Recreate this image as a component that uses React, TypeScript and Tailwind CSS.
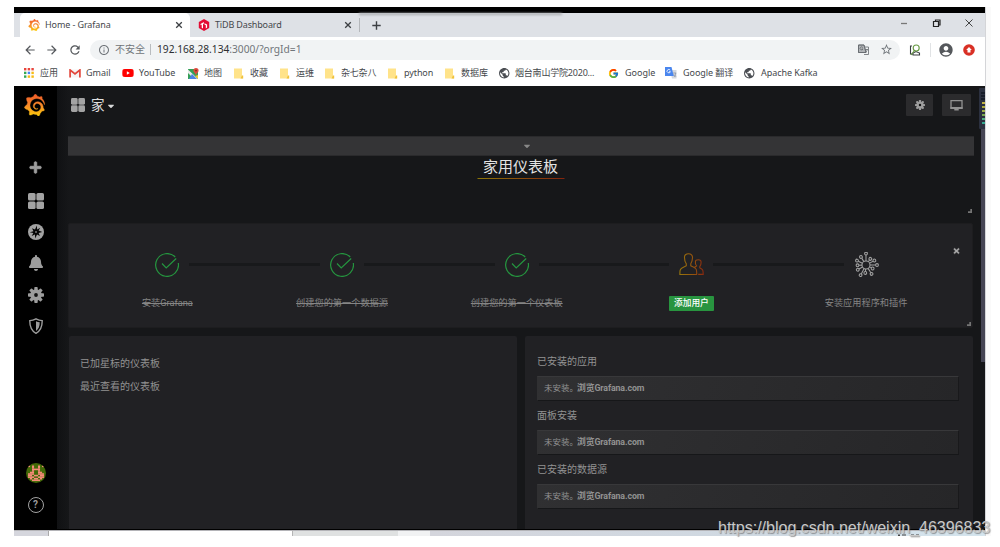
import React from "react";
import { SiGrafana } from "react-icons/si";
import { FcGoogle } from "react-icons/fc";
import { FaPlus, FaBell, FaCaretDown, FaYoutube, FaTimes } from "react-icons/fa";
import { MdPublic, MdAccountCircle, MdArrowBack, MdArrowForward, MdRefresh, MdInfoOutline, MdStarBorder } from "react-icons/md";

const ui = "font-['Noto_Sans','Noto_Sans_CJK_SC',sans-serif]";

function GrafanaLogo({ id, className }: { id: string; className: string }) {
  return (
    <span className="flex shrink-0">
      <svg className="absolute" width="0" height="0">
        <defs>
          <linearGradient id={id} x1="0" y1="0" x2="0" y2="1">
            <stop offset="0" stopColor="#f05a28" />
            <stop offset="0.5" stopColor="#f7882a" />
            <stop offset="1" stopColor="#fbca0a" />
          </linearGradient>
        </defs>
      </svg>
      <SiGrafana className={className} fill={`url(#${id})`} stroke={`url(#${id})`} strokeWidth={0.4} />
    </span>
  );
}

function TiDBLogo() {
  return (
    <svg viewBox="0 0 12 12" className="h-[12px] w-[12px] shrink-0">
      <path d="M6 0 11.2 3v6L6 12 .8 9V3z" fill="#e30c34" />
      <path d="M2.6 4.9 5.8 3v1.8L5 5.2v4.3l-1.3-.7V5.6l-1.1.6zM6.5 4.2l2.6 1.4v3L7.8 9.4V6.2l-1.3-.7z" fill="#fff" />
    </svg>
  );
}

function TabClose() {
  return (
    <svg viewBox="0 0 10 10" className="mr-[6px] h-[10px] w-[10px]" stroke="#3c3f43" strokeWidth="1.300">
      <path d="m2.200 2.200 5.600 5.600m0-5.600L2.200 7.800" />
    </svg>
  );
}

function AppsIcon() {
  const colors = ["#e8453c", "#e8453c", "#e8453c", "#34a853", "#4285f4", "#f6bb16", "#34a853", "#f6bb16", "#f6bb16"];
  return (
    <svg viewBox="0 0 10 10" className="h-[10px] w-[10px]">
      {colors.map((c, i) => (
        <rect key={i} x={(i % 3) * 3.7} y={Math.floor(i / 3) * 3.7} width="2.4" height="2.4" fill={c} />
      ))}
    </svg>
  );
}

const GmailIcon = () => (
  <svg viewBox="0 0 12 9" className="h-[9px] w-[12px]">
    <path d="M1 .5h10v8H1z" fill="#f5f5f5" />
    <path d="M1.1 8.5V1l4.9 4 4.9-4v7.5" fill="none" stroke="#e2463b" strokeWidth="1.7" />
  </svg>
);

const MapsIcon = () => (
  <svg viewBox="0 0 11 11" className="h-[11px] w-[11px]">
    <path d="M0 1h10v10H0z" fill="#34a057" />
    <path d="M0 1.6 10 11H6L0 5z" fill="#e9e9e9" />
    <path d="M4 6 9 11H1z" fill="#4c83e4" />
    <path d="M10 7v4L7 8z" fill="#f5c62c" />
    <path d="M8 0a2.6 2.6 0 0 1 2.6 2.6C10.600 4.600 8.500 5 8 7.400 7.500 5 5.400 4.600 5.400 2.600A2.600 2.600 0 0 1 8 0z" fill="#dd4b3e" />
    <circle cx="8" cy="2.600" r=".9" fill="#84261e" />
  </svg>
);

const FolderIcon = () => (
  <svg viewBox="0 0 10 11" className="h-[11px] w-[10px]">
    <path d="M0 .5h8v7.800h1V10.500H0z" fill="#ffe38a" />
    <path d="M8 7.500h1.200v3H6.500z" fill="#f0c23c" />
  </svg>
);

const TranslateIcon = () => (
  <svg viewBox="0 0 12 12" className="h-[12px] w-[12px]">
    <path d="M5 3h6.500v8.500H7z" fill="#d4d8df" />
    <path d="M0 0h6.500l2.300 9H0z" fill="#4a86ee" />
    <path d="M5.200 3.200A1.700 1.700 0 1 0 5.400 4.700H4" fill="none" stroke="#fff" strokeWidth=".8" />
    <path d="M8.200 6h3M9 10c1-1 1.500-2 1.700-4M9 7.500l2 2.300" stroke="#758195" strokeWidth=".6" fill="none" />
  </svg>
);

const Globe = () => <MdPublic className="-ml-px h-[12.500px] w-[12.500px] text-[#4b4e53]" />;

const bookmarks: { icon: React.ReactNode; label: string; w: string; t?: string }[] = [
  { icon: <AppsIcon />, label: "应用", w: "w-[45px]" },
  { icon: <GmailIcon />, label: "Gmail", w: "w-[53px]", t: "ml-[1px]" },
  { icon: <FaYoutube className="h-[12px] w-[12px] text-[#f00]" />, label: "YouTube", w: "w-[66px]", t: "ml-[1px]" },
  { icon: <MapsIcon />, label: "地图", w: "w-[46px]" },
  { icon: <FolderIcon />, label: "收藏", w: "w-[46px]" },
  { icon: <FolderIcon />, label: "运维", w: "w-[45px]" },
  { icon: <FolderIcon />, label: "杂七杂八", w: "w-[63px]", t: "tracking-[-0.2px]" },
  { icon: <FolderIcon />, label: "python", w: "w-[57px]", t: "tracking-[-0.1px]" },
  { icon: <FolderIcon />, label: "数据库", w: "w-[54px]" },
  { icon: <Globe />, label: "烟台南山学院2020...", w: "w-[109px]", t: "tracking-[-0.2px]" },
  { icon: <FcGoogle className="h-[11px] w-[11px]" />, label: "Google", w: "w-[57px]", t: "ml-[1px]" },
  { icon: <TranslateIcon />, label: "Google 翻译", w: "w-[79px]", t: "ml-[2px] tracking-[-0.05px]" },
  { icon: <Globe />, label: "Apache Kafka", w: "w-[90px]", t: "ml-[1px] tracking-[-0.05px]" },
];

function BrowserChrome() {
  return (
    <div className={`${ui} relative h-[73px] shrink-0 bg-white text-[9px] text-[#45484c]`}>
      <div className="flex h-[24px] items-center bg-[#dee1e6]">
        <div className="ml-[6px] flex h-full w-[170px] items-center rounded-t-[5px] bg-white pl-[8px]">
          <GrafanaLogo id="tabLogo" className="h-[12px] w-[12px]" />
          <span className="ml-[5px] flex-1 whitespace-nowrap tracking-[-0.1px]">Home - Grafana</span>
          <TabClose />
        </div>
        <div className="flex h-full w-[169px] items-center pl-[8px]">
          <TiDBLogo />
          <span className="ml-[5px] flex-1 whitespace-nowrap tracking-[-0.15px]">TiDB Dashboard</span>
          <TabClose />
        </div>
        <div className="h-[14px] w-px bg-[#b4b7bb]" />
        <svg viewBox="0 0 13 13" className="ml-[10px] h-[13px] w-[13px]" stroke="#3c3f43" strokeWidth="1.400">
          <path d="M2.300 6.500h8.400M6.500 2.300v8.400" />
        </svg>
        <div className="flex-1" />
        <svg viewBox="0 0 74 12" className="mb-[5px] mr-[10px] h-[12px] w-[74px]" fill="none" stroke="#222" strokeWidth="1">
          <path d="M-1 6.500h7" stroke="#777" strokeWidth="1.300" />
          <path d="M32.500 4.500h5v5h-5zM34.500 4.500v-1.500h4.500v5h-1.500" strokeWidth="1.200" />
          <path d="m64.500 2.500 7 7m0-7-7 7" stroke="#444" />
        </svg>
      </div>
      <div className="absolute left-[345px] top-0 h-[2px] w-[203px] bg-[#a9abaf] blur-[1px]" />
      <div className="flex h-[25px] items-center">
        <MdArrowBack className="ml-[9px] h-[14px] w-[14px] text-[#55585c]" />
        <MdArrowForward className="ml-[8px] h-[14px] w-[14px] text-[#55585c]" />
        <MdRefresh className="ml-[9px] h-[14px] w-[14px] text-[#55585c]" />
        <div className="ml-[8px] flex h-[20px] w-[810px] items-center rounded-full bg-[#f1f3f4] pl-[8px] text-[#70757a]">
          <MdInfoOutline className="h-[12px] w-[12px]" />
          <span className="ml-[5px] w-[35px] whitespace-nowrap text-[10px]">不安全</span>
          <span className="h-[11px] w-px bg-[#b9bcbf]" />
          <span className="ml-[6px] flex-1 whitespace-nowrap text-[10.200px]">
            <span className="text-[#2c2e31]">192.168.28.134</span>:3000/?orgId=1
          </span>
          <svg viewBox="0 0 11 11" className="h-[11px] w-[11px]" fill="none" stroke="#666a6e" strokeWidth=".8">
            <path d="M.500 1h5.500l2 7.500H.500zM7 3h3.500v7.500H6M4.800 3.500A1.500 1.500 0 1 0 5 5H3.800M7.200 5.500H10M7.500 8.500C9 7.500 9 6 9 5.500" />
            <path d="M.500 1h5.500l2 7.500H.500z" fill="#666a6e" fillOpacity=".45" />
          </svg>
          <MdStarBorder className="ml-[11px] mr-[7px] h-[13px] w-[13px]" />
        </div>
        <svg viewBox="0 0 12 12" className="ml-[9px] h-[12px] w-[12px]" fill="none" strokeWidth="1.100">
          <path d="M3 2H1.500v8H4M4 11V9l3-1.500L10.500 9v2H3.500" stroke="#3c4043" />
          <circle cx="7.200" cy="4" r="3" stroke="#679a42" />
          <path d="M5.500 6.500 2 11" stroke="#679a42" />
        </svg>
        <div className="ml-[9px] h-[14px] w-px bg-[#e1e3e5]" />
        <MdAccountCircle className="ml-[7px] h-[16px] w-[16px] text-[#55585c]" />
        <svg viewBox="0 0 12 12" className="ml-[9px] h-[12px] w-[12px]">
          <circle cx="6" cy="6" r="5.800" fill="#d93025" />
          <path d="M6 3 8.800 6H7.500v2.500H4.500V6H3.200z" fill="#fff" />
        </svg>
      </div>
      <div className="flex h-[22px] items-center pl-[10px]">
        {bookmarks.map((b, i) => (
          <div key={i} className={`flex shrink-0 items-center whitespace-nowrap ${b.w}`}>
            <span className="flex w-[16px] shrink-0">{b.icon}</span>
            <span className={b.t ?? ""}>{b.label}</span>
          </div>
        ))}
      </div>
    </div>
  );
}

const Squares = ({ className }: { className: string }) => (
  <svg viewBox="0 0 16 16" className={className} fill="#a3a3a3">
    <rect width="7.600" height="7.600" rx="1.600" />
    <rect x="8.400" width="7.600" height="7.600" rx="1.600" />
    <rect y="8.400" width="7.600" height="7.600" rx="1.600" />
    <rect x="8.400" y="8.400" width="7.600" height="7.600" rx="1.600" />
  </svg>
);

function Gear({ className }: { className: string }) {
  return (
    <svg viewBox="0 0 16 16" className={className}>
      <g fill="#9d9d9d">
        {[0, 45, 90, 135].map((a) => (
          <rect key={a} x="6.300" y="0" width="3.400" height="16" rx=".8" transform={`rotate(${a} 8 8)`} />
        ))}
        <circle cx="8" cy="8" r="5.800" />
      </g>
      <circle cx="8" cy="8" r="1.900" fill="#111" />
    </svg>
  );
}

function Avatar() {
  const rows = ["10100101", "00100100", "00111100", "00100100", "01100110", "11100111", "11011011", "11100111", "01011010", "00111100"];
  return (
    <svg viewBox="0 0 20 20" className="h-[20px] w-[20px]">
      <clipPath id="av"><circle cx="10" cy="10" r="10" /></clipPath>
      <g clipPath="url(#av)">
        <rect width="20" height="20" fill="#426907" />
        {rows.map((r, y) =>
          r.split("").map((c, x) => (c === "1" ? <rect key={`${x}-${y}`} x={2 + x * 2} y={2.500 + y * 1.550} width="2.050" height="1.600" fill="#f58b78" /> : null)),
        )}
      </g>
    </svg>
  );
}

function Sidebar() {
  return (
    <div className="flex w-[43px] shrink-0 flex-col items-center bg-black text-[#9d9d9d]">
      <div className="mt-[8px] h-[22px] -translate-x-[1.500px]"><GrafanaLogo id="sideLogo" className="h-[22px] w-[22px]" /></div>
      <FaPlus className="mt-[45px] h-[13px] w-[13px]" stroke="currentColor" strokeWidth={36} />
      <Squares className="mt-[19px] h-[16px] w-[16px]" />
      <svg viewBox="0 0 16 16" className="mt-[15px] h-[16px] w-[16px]">
        <circle cx="8" cy="8" r="8" fill="#a3a3a3" />
        <path d="M8.800 1.500 9.200 5.500 12.300 3.800 10.600 6.600 14.300 8 10.600 8.900 12 12 9 10.500 7.300 14.500 6.900 10.600 3.700 12 5.400 9.100 1.800 8.200 5.500 7.200 4 4.200 7 5.600z" fill="#050505" />
        <circle cx="8" cy="8" r="1" fill="#777" />
      </svg>
      <FaBell className="mt-[15px] h-[16px] w-[14px]" />
      <Gear className="mt-[16px] h-[16px] w-[16px]" />
      <svg viewBox="0 0 14 16" className="mt-[15px] h-[16px] w-[14px]">
        <path d="M7 .800Q4 2.500.800 2.600C.700 8.500 2 12.800 7 15.300 12 12.800 13.300 8.500 13.200 2.600 10 2.500 7 .800 7 .800z" fill="none" stroke="#9d9d9d" strokeWidth="1.400" />
        <path d="M7 3.200c1.300.7 2.500 1 3.700 1.100 0 4-1 6.800-3.700 8.600z" fill="#9d9d9d" />
      </svg>
      <div className="flex-1" />
      <Avatar />
      <div className="mb-[16px] mt-[14px] flex h-[16px] w-[16px] items-center justify-center rounded-full border-[1.500px] border-[#a3a3a3] font-['Roboto','Liberation_Sans',sans-serif] text-[10px] font-bold leading-none">?</div>
    </div>
  );
}

const CheckIcon = () => (
  <svg viewBox="0 0 24 24" className="h-[24px] w-[24px]" fill="none" stroke="#25953f" strokeWidth="1.200">
    <path d="M23.300 10A11.400 11.400 0 1 1 20.200 4" />
    <path d="m7 10.500 4.200 4.500L21.200 5.500" />
  </svg>
);

const UsersIcon = () => (
  <svg viewBox="0 0 25 24" className="h-[24px] w-[25px]">
    <defs>
      <linearGradient id="ug" x1="0" x2="25" y1="0" y2="0" gradientUnits="userSpaceOnUse">
        <stop stopColor="#97770c" />
        <stop offset=".6" stopColor="#94510e" />
        <stop offset="1" stopColor="#8a260e" />
      </linearGradient>
    </defs>
    <g fill="none" stroke="url(#ug)" strokeWidth="1.100">
      <path d="M5.500 4.500C5.300 2 7 .800 9.500.800s4.200 1.400 4 4c-.1 3.200-.8 4.500-1.700 6v2c2.500 1.300 5 1.500 5.500 3.700.3 1.200.5 3 .4 5H.900c0-2-.1-3.600.4-4.800.7-2 3.800-2.500 6-3.900v-2C6 9.300 5.500 7.500 5.500 4.500z" />
      <path d="M15.300 14.500 17.600 13c-1-1.200-1.400-3-1.200-4.500.2-1.300 1.500-1.800 3-1.800 1.800 0 2.800 1 2.700 2.800 0 1.700-.3 2.600-1.300 4v1.400c1.500 1 2.600 1.300 3 2.500.4 1.300.4 2.600.4 4h-5" />
    </g>
  </svg>
);

function PluginIcon() {
  const spokes = [[0, 11.500], [35, 7.500], [62, 9.500], [90, 11], [118, 7.500], [148, 10.500], [185, 8], [208, 11.500], [240, 9.500], [268, 8.500], [296, 10], [328, 9.500]];
  return (
    <svg viewBox="0 0 26 26" className="h-[26px] w-[26px]" fill="none" stroke="#a2a2a2" strokeWidth="1.050">
      <circle cx="13" cy="13" r="4" />
      {spokes.map(([a, r]) => (
        <g key={a} transform={`rotate(${a} 13 13)`}>
          <path d={`M13 9V${13 - r + 1.400}`} />
          <circle cx="13" cy={13 - r} r="1.400" />
        </g>
      ))}
    </svg>
  );
}

const steps = [
  { icon: <CheckIcon />, label: "安装Grafana", kind: "done" },
  { icon: <CheckIcon />, label: "创建您的第一个数据源", kind: "done" },
  { icon: <CheckIcon />, label: "创建您的第一个仪表板", kind: "done" },
  { icon: <UsersIcon />, label: "添加用户", kind: "cta" },
  { icon: <PluginIcon />, label: "安装应用程序和插件", kind: "todo" },
];

const Corner = () => (
  <svg viewBox="0 0 4 4" className="absolute bottom-px right-[1px] h-[4px] w-[4px]"><path d="M4 0v4H0V2.300h2.300V0z" fill="#747474" /></svg>
);

function Steps() {
  return (
    <div className="relative mt-[9px] flex h-[105px] w-[905px] shrink-0 rounded-[2px] border border-[#1d1d1f] bg-[#212124] pl-[11px] pt-[27px]">
      {steps.map((s, i) => (
        <div key={i} className="flex w-[174.700px] shrink-0 flex-col items-center">
          <div className="flex h-[27px] w-full items-center">
            <div className={i === 0 ? "h-[3px] flex-1" : "h-[3px] flex-1 bg-[#18191b]"} />
            <div className="flex w-[44px] justify-center">{s.icon}</div>
            <div className={i === 4 ? "h-[3px] flex-1" : "h-[3px] flex-1 bg-[#18191b]"} />
          </div>
          {s.kind === "cta" ? (
            <div className="mt-[18px] flex h-[15px] w-[45px] items-center justify-center whitespace-nowrap rounded-[1px] bg-[#28943f] text-[8.700px] font-medium text-white">{s.label}</div>
          ) : (
            <div className={s.kind === "done" ? "mt-[17px] whitespace-nowrap text-[9.200px] leading-[15px] text-[#858585] line-through" : "mt-[17px] whitespace-nowrap text-[9.200px] leading-[15px] text-[#858585]"}>{s.label}</div>
          )}
        </div>
      ))}
      <FaTimes className="absolute right-[12px] top-[23px] h-[8px] w-[7px] text-[#aaa]" stroke="currentColor" strokeWidth={24} />
      <Corner />
    </div>
  );
}

function Dashboard() {
  return (
    <div className="relative flex min-w-0 flex-1 flex-col bg-[linear-gradient(90deg,#101113_0,#161719_12px)] pl-[11px] font-['Roboto','Noto_Sans_CJK_SC',sans-serif] text-[#929292]">
      <div className="flex h-[50px] shrink-0 items-start pr-[14px] pt-[8px]">
        <Squares className="ml-[3px] mt-[4px] h-[14px] w-[14px]" />
        <span className="ml-[6px] mt-[1px] text-[13.500px] leading-[20px] text-[#e0e0e0]">家</span>
        <FaCaretDown className="ml-[2px] mt-[7px] h-[10px] w-[8px] text-[#d8d9da]" />
        <div className="flex-1" />
        <div className="flex h-[22px] w-[27px] items-center justify-center rounded-[1px] bg-[#2b2b2d]"><Gear className="h-[10px] w-[10px]" /></div>
        <div className="ml-[9px] flex h-[22px] w-[29px] items-center justify-center rounded-[1px] bg-[#2b2b2d]">
          <svg viewBox="0 0 13 11" className="h-[11px] w-[13px]"><path d="M1 .700h11v7.300H1z" fill="none" stroke="#929292" strokeWidth="1.300" /><path d="M.400 7h12.200v1.900H.400zM4.300 9h4.400v1.600H4.300z" fill="#929292" /></svg>
        </div>
      </div>
      <div className="flex h-[20px] w-[906px] shrink-0 items-center justify-center border-y border-[#2a2a2c] bg-[#343436] pb-px pl-[12px]">
        <FaCaretDown className="h-[10px] w-[8px] text-[#888]" />
      </div>
      <div className="relative flex h-[58px] w-[905px] shrink-0 justify-center">
        <div className="flex h-[23px] w-[87px] translate-x-[0.500px] items-center justify-center bg-[linear-gradient(90deg,#8b7509,#8b4d0b,#83240d)] bg-[length:100%_1px] bg-bottom bg-no-repeat pb-[2px] pr-px text-[15px] leading-[20px] text-[#e3e3e3]">家用仪表板</div>
        <Corner />
      </div>
      <Steps />
      <div className="mt-[8px] flex flex-1 gap-[8px]">
        <div className="ml-px w-[448px] rounded-t-[2px] bg-[#212124] pl-[11px] pt-[17px] text-[10px] leading-[22.500px]">
          <div>已加星标的仪表板</div>
          <div>最近查看的仪表板</div>
        </div>
        <div className="w-[448px] rounded-t-[2px] bg-[#212124] pl-[12px] pt-[16px] text-[10px]">
          {["已安装的应用", "面板安装", "已安装的数据源"].map((t) => (
            <div key={t} className="h-[54px]">
              <div className="h-[24px] leading-[19px]">{t}</div>
              <div className="flex h-[25px] w-[422px] items-center border border-b-[#161719] border-l-[#303032] border-r-[#19191b] border-t-[#38383a] bg-[linear-gradient(110deg,#303032,#262628)] pl-[6px] text-[8.500px] text-[#929292]">
                <span className="w-[33px] whitespace-nowrap">未安装。</span>
                <span className="text-[8.800px] font-bold tracking-[-0.1px]">浏览Grafana.com</span>
              </div>
            </div>
          ))}
        </div>
      </div>
      <div className="absolute right-0 top-[43px] h-[233px] w-[4px] bg-[#454554]" />
      <div className="absolute right-0 top-[2px] flex h-[41px] w-[6px] flex-col items-end gap-[1px] rounded-l-[1px] bg-[#2b303f] pt-[4px]">
        <i className="h-[2px] w-[4px] bg-[#161c28]" />
        <i className="h-[2px] w-[4px] bg-[#161c28]" />
        <i className="h-[2px] w-[4px] bg-[#161c28]" />
        <i className="mt-[1px] h-[2px] w-[3px] bg-[#c0b243]" />
        <i className="mt-[1px] h-[2px] w-[3px] bg-[#a9a83b]" />
        <i className="mt-[1px] h-[2px] w-[3px] bg-[#9dac48]" />
        <i className="mt-[1px] h-[2px] w-[3px] bg-[#76a64d]" />
        <i className="mt-[1px] h-[2px] w-[3px] bg-[#50ad81]" />
        <i className="mt-[1px] h-[2px] w-[3px] bg-[#32a78e]" />
      </div>
    </div>
  );
}

export default function App() {
  return (
    <div className="relative h-[547px] w-[1000px] overflow-hidden bg-white pl-[14px] pt-[7px]">
      <div className="flex h-[529px] w-[977px] bg-[#fafafa]">
        <div className="flex h-[529px] w-[972px] flex-col overflow-hidden border-r border-[#d4d5d8]">
          <div className="h-[6px] shrink-0 bg-black" />
          <BrowserChrome />
          <div className="flex h-[444px] shrink-0 border-b border-black">
            <Sidebar />
            <Dashboard />
          </div>
          <div className="flex h-[6px] border-t border-[#b4b4b8] bg-[#d5d6dd]">
            <div className="w-[35px] border-r border-[#aaa]" />
            <div className="w-[244px] border-r border-[#b5b5b5] bg-white" />
            <div className="w-[105px] bg-[#dfe1e1]" />
            <div className="w-[32px] bg-[#f1f2f3]" />
            <div className="flex flex-1 items-end bg-[linear-gradient(90deg,#d4d5dc,#cfd9e2_60%,#d5e5ee)] pl-[467px]">
              <svg viewBox="0 0 22 2" className="h-[2px] w-[22px]" fill="#444">
                <path d="M1 .5h2V2H1zM5 .5h4v1H5zM14 .5h3v1h-3zM19 .5h3v1h-3z" />
              </svg>
            </div>
          </div>
        </div>
      </div>
      <div className="absolute left-[718px] top-[517px] whitespace-nowrap font-['Liberation_Sans',sans-serif] text-[16px] leading-[22px] text-[#c9c9c9] [text-shadow:1px_1px_1px_rgba(90,90,90,0.6)]">https://blog.csdn.net/weixin_46396833</div>
    </div>
  );
}
